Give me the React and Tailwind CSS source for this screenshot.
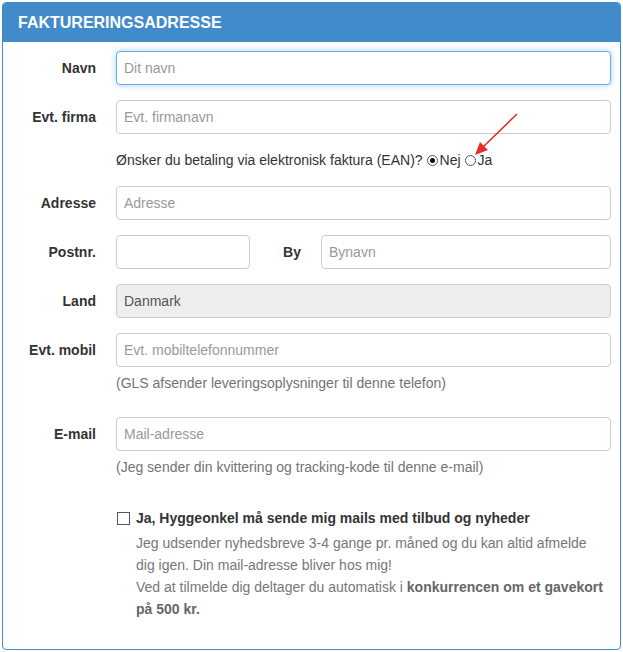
import React from 'react';

const fieldBase =
  'h-[34px] rounded-[4px] border px-[7px] text-[14px] text-[#555] placeholder:text-[#999] outline-none';

const Label = ({ children, className = 'w-[93px]' }) => (
  <label className={`${className} shrink-0 text-right text-[14px] font-bold text-[#333]`}>
    {children}
  </label>
);

const Radio = ({ checked }) => (
  <span className="inline-flex h-[11px] w-[11px] items-center justify-center rounded-full border border-[#555] bg-white">
    {checked && <span className="h-[5px] w-[5px] rounded-full bg-[#111]" />}
  </span>
);

const Row = ({ label, placeholder, className = 'mb-[15px]', focused, disabled, value }) => (
  <div className={`flex items-center ${className}`}>
    <Label>{label}</Label>
    <input
      className={`${fieldBase} ml-[20px] flex-1 ${
        focused
          ? 'border-[#66afe9] bg-white shadow-[0_0_6px_rgba(102,175,233,0.6)]'
          : 'border-[#cccccc]'
      } ${disabled ? 'bg-[#eeeeee]' : 'bg-white'}`}
      placeholder={placeholder}
      defaultValue={value}
      disabled={disabled}
    />
  </div>
);

export default function App() {
  return (
    <div
      className="min-h-screen bg-white pl-[2px] pt-[2px]"
      style={{ fontFamily: '"Liberation Sans", Arial, sans-serif' }}
    >
      <div className="relative w-[619px] overflow-hidden rounded-[4px] border border-[#428bca] bg-white">
        {/* header */}
        <div className="flex h-[39px] items-center bg-[#428bca] px-[15px] text-[16px] font-bold uppercase text-white">
          Faktureringsadresse
        </div>

        <div className="pb-[29px] pr-[9px] pt-[9px]">
          <Row label="Navn" placeholder="Dit navn" focused />
          <Row label="Evt. firma" placeholder="Evt. firmanavn" />

          <div className="mb-[15px] flex h-[22px] items-center pl-[113px] text-[14px] text-[#333]">
            <span>Ønsker du betaling via elektronisk faktura (EAN)?</span>
            <span className="ml-[4px] flex items-center">
              <Radio checked />
              <span className="ml-[2px]">Nej</span>
            </span>
            <span className="ml-[4px] flex items-center">
              <Radio />
              <span className="ml-[2px]">Ja</span>
            </span>
          </div>

          <Row label="Adresse" placeholder="Adresse" />

          <div className="mb-[15px] flex items-center">
            <Label>Postnr.</Label>
            <input className={`${fieldBase} ml-[20px] w-[134px] border-[#cccccc] bg-white`} />
            <Label className="w-[51px]">By</Label>
            <input
              className={`${fieldBase} ml-[20px] flex-1 border-[#cccccc] bg-white`}
              placeholder="Bynavn"
            />
          </div>

          <Row label="Land" value="Danmark" disabled />

          <Row label="Evt. mobil" placeholder="Evt. mobiltelefonnummer" className="" />
          <div className="mb-[24px] mt-[6px] pl-[113px] text-[14px] leading-[20px] text-[#737373]">
            (GLS afsender leveringsoplysninger til denne telefon)
          </div>

          <Row label="E-mail" placeholder="Mail-adresse" className="" />
          <div className="mt-[6px] pl-[113px] text-[14px] leading-[20px] text-[#737373]">
            (Jeg sender din kvittering og tracking-kode til denne e-mail)
          </div>

          <div className="mt-[30px] flex h-[22px] items-center pl-[114px]">
            <span className="h-[13px] w-[13px] shrink-0 border border-[#555] bg-white" />
            <span className="ml-[6px] text-[14px] font-bold text-[#333]">
              Ja, Hyggeonkel må sende mig mails med tilbud og nyheder
            </span>
          </div>
          <div className="mt-[3px] pl-[133px] text-[14px] leading-[22px] text-[#777]">
            Jeg udsender nyhedsbreve 3-4 gange pr. måned og du kan altid afmelde
            <br />
            dig igen. Din mail-adresse bliver hos mig!
            <br />
            Ved at tilmelde dig deltager du automatisk i{' '}
            <b className="text-[#666]">konkurrencen om et gavekort</b>
            <br />
            <b className="text-[#666]">på 500 kr.</b>
          </div>
        </div>

        {/* red annotation arrow */}
        <svg
          className="pointer-events-none absolute left-0 top-0"
          width="619"
          height="200"
          viewBox="0 0 619 200"
        >
          <line x1="514" y1="111" x2="480" y2="144" stroke="#e52d2d" strokeWidth="1.6" />
          <polygon points="472,152 477,139 485,147" fill="#e52d2d" />
        </svg>
      </div>
    </div>
  );
}
